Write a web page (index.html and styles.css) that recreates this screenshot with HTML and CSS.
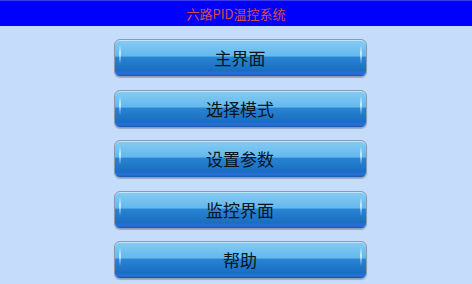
FILE: index.html
```html
<!DOCTYPE html>
<html lang="zh-CN">
<head>
  <meta charset="UTF-8" />
  <meta name="viewport" content="width=device-width, initial-scale=1.0"/>
  <title>六路PID温控系统</title>
  <link rel="stylesheet" href="styles.css">
</head>
<body>

  <div class="header">六路PID温控系统</div>

  <div class="menu">
    <button class="btn">主界面</button>
    <button class="btn">选择模式</button>
    <button class="btn">设置参数</button>
    <button class="btn">监控界面</button>
    <button class="btn">帮助</button>
  </div>

</body>
</html>
```

FILE: styles.css
```css
* {
  box-sizing: border-box;
}

body {
  margin: 0;
  height: 284px;
  overflow: hidden;
  background: #c5ddfb;
  font-family: "Noto Sans CJK SC", "Liberation Sans", sans-serif;
}

.header {
  height: 26px;
  background: #0000fc;
  border-top: 1px solid #3a3af0;
  color: #d84a52;
  font-size: 13px;
  line-height: 25px;
  text-align: center;
}

.menu {
  display: flex;
  flex-direction: column;
  align-items: center;
  gap: 12.5px;
  padding-top: 13px;
  padding-left: 8px;
}

.btn {
  position: relative;
  width: 253px;
  height: 38px;
  padding: 0;
  border: 1px solid #8a9cb4;
  border-radius: 6px;
  background: linear-gradient(to bottom,
    #86ccf2 0%, #62b8ee 45%, #2a84d2 47%, #1a6ec2 85%, #2a6ee0 94%, #1558a8 100%);
  box-shadow: inset 0 1px 0 rgba(255,255,255,0.5), 0 1px 1px rgba(60,80,110,0.35);
  color: #0a1420;
  font-family: inherit;
  font-size: 17px;
  line-height: 36px;
  cursor: pointer;
}

.btn::before,
.btn::after {
  content: "";
  position: absolute;
  top: 5px;
  bottom: 12px;
  width: 2px;
  border-radius: 1px;
  background: linear-gradient(to bottom, rgba(255,255,255,0), rgba(255,255,255,0.7) 45%, rgba(255,255,255,0));
}

.btn::before {
  left: 4px;
}

.btn::after {
  right: 4px;
}
```
